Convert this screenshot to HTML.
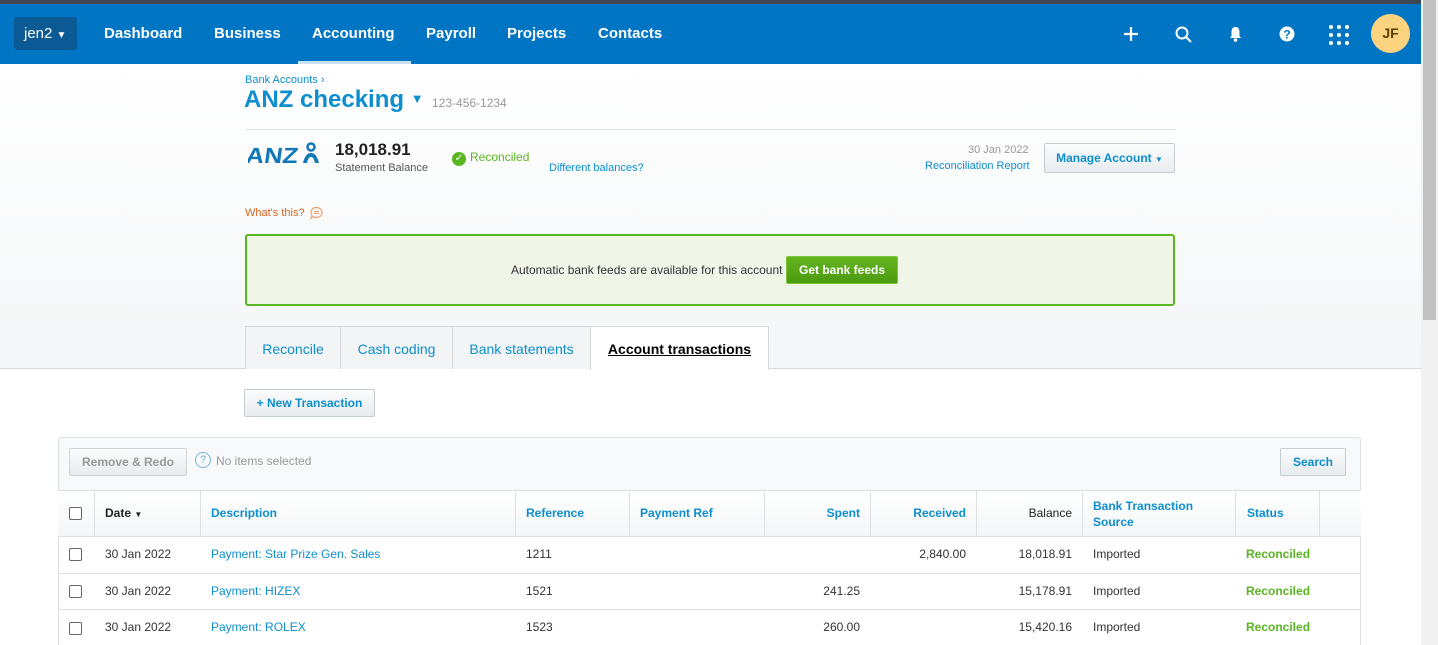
<!DOCTYPE html>
<html><head><meta charset="utf-8"><style>
*{box-sizing:border-box;margin:0;padding:0}
html,body{width:1438px;height:645px;overflow:hidden}
body{font-family:"Liberation Sans",Arial,sans-serif;font-size:12px;color:#333;background:#fff;position:relative}
.a{position:absolute}
.blue{color:#0d8ecf}
.top{left:0;top:0;width:1421px;height:4px;background:#3d4652}
.nav{left:0;top:4px;width:1421px;height:60px;background:#0075c4}
.nav .l{color:#fff;font-weight:bold;font-size:15px;top:21px}
.hdr{left:0;top:64px;width:1421px;height:305px;background:linear-gradient(#fff,#f4f6f7)}
.btn{border:1px solid #c6cdd2;border-radius:2px;background:linear-gradient(#fbfcfc,#e8ecee);color:#0d8ecf;font-weight:bold;font-size:12px;text-align:center}
.tab{top:326px;height:43px;border:1px solid #d5dadd;border-bottom:none;background:#f2f4f5;color:#0d8ecf;font-size:14px;text-align:center;line-height:45px}
.sb{left:1421px;top:0;width:17px;height:645px;background:#f1f1f1}
.th{left:1423px;top:0;width:13px;height:320px;background:#c1c1c1}
.tbl{left:58px;top:437px;width:1303px;height:208px;border:1px solid #dde1e3;border-bottom:none;border-radius:3px 3px 0 0;background:#f8f9fa}
.hr{left:58px;top:490px;width:1303px;height:47px;background:linear-gradient(#fff,#f4f6f7);border-top:1px solid #dde1e3;border-bottom:1px solid #dde1e3}
.v{width:1px;background:#dde1e3;top:491px;height:45px}
.row{left:59px;width:1301px;height:37px;background:#fff;border-bottom:1px solid #dde1e3}
.c{font-size:12px}
.cb{width:13px;height:13px;border:1px solid #666;border-radius:2px;background:#fff;left:69px}
.hd{top:506px;font-weight:bold;font-size:12px;color:#0d8ecf}
.g{color:#5ab522;font-weight:bold}
</style></head><body>
<div class="a top"></div>
<div class="a nav">
 <div class="a" style="left:14px;top:13px;width:63px;height:33px;background:#0b5a96;border-radius:3px;color:#fff;font-size:15px;line-height:33px;padding-left:10px">jen2 <span style="font-size:10px">▼</span></div>
 <div class="a l" style="left:104px">Dashboard</div>
 <div class="a l" style="left:214px">Business</div>
 <div class="a l" style="left:312px">Accounting</div>
 <div class="a" style="left:298px;top:57px;width:113px;height:3px;background:#c9e1f3"></div>
 <div class="a l" style="left:426px">Payroll</div>
 <div class="a l" style="left:507px">Projects</div>
 <div class="a l" style="left:598px">Contacts</div>
 <svg class="a" style="left:1124px;top:23px" width="14" height="14"><path d="M7 0v14M0 7h14" stroke="#fff" stroke-width="2.2"/></svg>
 <svg class="a" style="left:1175px;top:22px" width="17" height="17"><circle cx="7" cy="7" r="5.5" fill="none" stroke="#fff" stroke-width="2"/><path d="M11 11l5 5" stroke="#fff" stroke-width="2"/></svg>
 <svg class="a" style="left:1228px;top:22px" width="15" height="16"><path d="M7.5 1C4 1 3.5 4 3.5 7v3L2 12h11l-1.5-2V7C11.5 4 11 1 7.5 1z" fill="#fff"/><circle cx="7.5" cy="14" r="1.8" fill="#fff"/></svg>
 <svg class="a" style="left:1279px;top:22px" width="16" height="16"><circle cx="8" cy="8" r="7.5" fill="#fff"/><text x="8" y="12.5" text-anchor="middle" font-family="Liberation Sans" font-weight="bold" font-size="12" fill="#0075c4">?</text></svg>
 <svg class="a" style="left:1328px;top:20px" width="22" height="22" fill="#fff"><circle cx="3" cy="3" r="2"/><circle cx="11" cy="3" r="2"/><circle cx="19" cy="3" r="2"/><circle cx="3" cy="11" r="2"/><circle cx="11" cy="11" r="2"/><circle cx="19" cy="11" r="2"/><circle cx="3" cy="19" r="2"/><circle cx="11" cy="19" r="2"/><circle cx="19" cy="19" r="2"/></svg>
 <div class="a" style="left:1371px;top:10px;width:39px;height:39px;border-radius:50%;background:#fcd480;color:#5a3d00;font-weight:bold;font-size:14px;text-align:center;line-height:39px">JF</div>
</div>
<div class="a hdr"></div>
<div class="a blue" style="left:245px;top:74px;font-size:11px">Bank Accounts ›</div>
<div class="a blue" style="left:244px;top:86px;font-size:24px;font-weight:bold">ANZ checking <span style="font-size:13px;vertical-align:4px">▼</span></div>
<div class="a" style="left:432px;top:96px;color:#999;font-size:12px">123-456-1234</div>
<div class="a" style="left:245px;top:129px;width:930px;height:1px;background:#e0e3e5"></div>
<svg class="a" style="left:248px;top:142px" width="74" height="24">
 <text x="0" y="21" font-family="Liberation Sans" font-weight="bold" font-size="22" fill="#1077b8" transform="skewX(-8)" textLength="52" lengthAdjust="spacingAndGlyphs">ANZ</text>
 <circle cx="63" cy="5" r="3.5" fill="none" stroke="#1077b8" stroke-width="2.5"/>
 <path d="M55 21c2-8 5-10 8-10s6 2 8 10l-4 0c-1-4-2-6-4-6s-3 2-4 6z" fill="#1077b8"/>
</svg>
<div class="a" style="left:335px;top:140px;font-size:17px;font-weight:bold;color:#222">18,018.91</div>
<div class="a" style="left:335px;top:162px;font-size:11px;color:#555">Statement Balance</div>
<div class="a" style="left:452px;top:152px;width:14px;height:14px;border-radius:50%;background:#5ab522;color:#fff;font-size:10px;text-align:center;line-height:14px">✓</div>
<div class="a" style="left:470px;top:150px;font-size:12px;color:#5ab522">Reconciled</div>
<div class="a blue" style="left:549px;top:162px;font-size:11px">Different balances?</div>
<div class="a" style="left:968px;top:144px;font-size:11px;color:#999">30 Jan 2022</div>
<div class="a blue" style="left:925px;top:160px;font-size:11px">Reconciliation Report</div>
<div class="a btn" style="left:1044px;top:143px;width:131px;height:30px;line-height:28px">Manage Account <span style="font-size:8px">▼</span></div>
<div class="a" style="left:245px;top:207px;font-size:11px;color:#d8641c">What's this?</div>
<svg class="a" style="left:309px;top:206px" width="15" height="14"><path d="M7.5 1.5a5.5 5 0 1 1-3 9.2L2 12.5l1-3A5 5 0 0 1 7.5 1.5z" fill="none" stroke="#f0a070" stroke-width="1.2"/><path d="M5 5.5h5M5 7.5h5" stroke="#f0a070"/></svg>
<div class="a" style="left:245px;top:234px;width:930px;height:72px;border:2px solid #5ab522;border-radius:3px;background:#eff6e7"></div>
<div class="a" style="left:511px;top:263px;font-size:12px;color:#333">Automatic bank feeds are available for this account</div>
<div class="a" style="left:786px;top:256px;width:112px;height:28px;background:linear-gradient(#65b51f,#4a9a10);border:1px solid #7cc43a;border-radius:2px;color:#fff;font-weight:bold;text-align:center;line-height:26px">Get bank feeds</div>
<div class="a" style="left:0;top:368px;width:1421px;height:1px;background:#d5dadd"></div>
<div class="a tab" style="left:245px;width:96px">Reconcile</div>
<div class="a tab" style="left:340px;width:113px">Cash coding</div>
<div class="a tab" style="left:452px;width:139px">Bank statements</div>
<div class="a tab" style="left:590px;width:179px;height:44px;background:#fff;color:#000;font-weight:bold;text-decoration:underline">Account transactions</div>
<div class="a btn" style="left:244px;top:389px;width:131px;height:28px;line-height:26px">+ New Transaction</div>
<div class="a tbl"></div>
<div class="a btn" style="left:69px;top:448px;width:118px;height:28px;line-height:26px;color:#999;border-color:#d0d5d8">Remove &amp; Redo</div>
<div class="a" style="left:195px;top:452px;width:16px;height:16px;border:1px solid #7ab0d8;border-radius:50%;color:#7ab0d8;font-size:11px;text-align:center;line-height:14px">?</div>
<div class="a" style="left:216px;top:454px;color:#999">No items selected</div>
<div class="a btn" style="left:1280px;top:448px;width:66px;height:28px;line-height:26px">Search</div>
<div class="a hr"></div>
<div class="a v" style="left:94px"></div><div class="a v" style="left:200px"></div><div class="a v" style="left:515px"></div><div class="a v" style="left:629px"></div><div class="a v" style="left:764px"></div><div class="a v" style="left:870px"></div><div class="a v" style="left:976px"></div><div class="a v" style="left:1082px"></div><div class="a v" style="left:1235px"></div><div class="a v" style="left:1319px"></div>
<div class="a cb" style="top:507px"></div>
<div class="a hd" style="left:105px;color:#222">Date <span style="font-size:8px">▼</span></div>
<div class="a hd" style="left:211px">Description</div>
<div class="a hd" style="left:526px">Reference</div>
<div class="a hd" style="left:640px">Payment Ref</div>
<div class="a hd" style="left:764px;width:96px;text-align:right">Spent</div>
<div class="a hd" style="left:870px;width:96px;text-align:right">Received</div>
<div class="a hd" style="left:976px;width:96px;text-align:right;color:#222;font-weight:normal">Balance</div>
<div class="a hd" style="left:1093px;top:498px;line-height:16px">Bank Transaction<br>Source</div>
<div class="a hd" style="left:1247px">Status</div>

<div class="a row" style="top:537px"></div>
<div class="a cb" style="top:548px"></div>
<div class="a c" style="left:105px;top:547px">30 Jan 2022</div>
<div class="a c blue" style="left:211px;top:547px">Payment: Star Prize Gen. Sales</div>
<div class="a c" style="left:526px;top:547px">1211</div>
<div class="a c" style="left:870px;top:547px;width:96px;text-align:right">2,840.00</div>
<div class="a c" style="left:976px;top:547px;width:96px;text-align:right">18,018.91</div>
<div class="a c" style="left:1093px;top:547px">Imported</div>
<div class="a c g" style="left:1246px;top:547px">Reconciled</div>

<div class="a row" style="top:574px;height:36px"></div>
<div class="a cb" style="top:585px"></div>
<div class="a c" style="left:105px;top:584px">30 Jan 2022</div>
<div class="a c blue" style="left:211px;top:584px">Payment: HIZEX</div>
<div class="a c" style="left:526px;top:584px">1521</div>
<div class="a c" style="left:764px;top:584px;width:96px;text-align:right">241.25</div>
<div class="a c" style="left:976px;top:584px;width:96px;text-align:right">15,178.91</div>
<div class="a c" style="left:1093px;top:584px">Imported</div>
<div class="a c g" style="left:1246px;top:584px">Reconciled</div>

<div class="a row" style="top:610px;height:35px;border-bottom:none"></div>
<div class="a cb" style="top:622px"></div>
<div class="a c" style="left:105px;top:620px">30 Jan 2022</div>
<div class="a c blue" style="left:211px;top:620px">Payment: ROLEX</div>
<div class="a c" style="left:526px;top:620px">1523</div>
<div class="a c" style="left:764px;top:620px;width:96px;text-align:right">260.00</div>
<div class="a c" style="left:976px;top:620px;width:96px;text-align:right">15,420.16</div>
<div class="a c" style="left:1093px;top:620px">Imported</div>
<div class="a c g" style="left:1246px;top:620px">Reconciled</div>

<div class="a sb"></div><div class="a th"></div>
</body></html>
